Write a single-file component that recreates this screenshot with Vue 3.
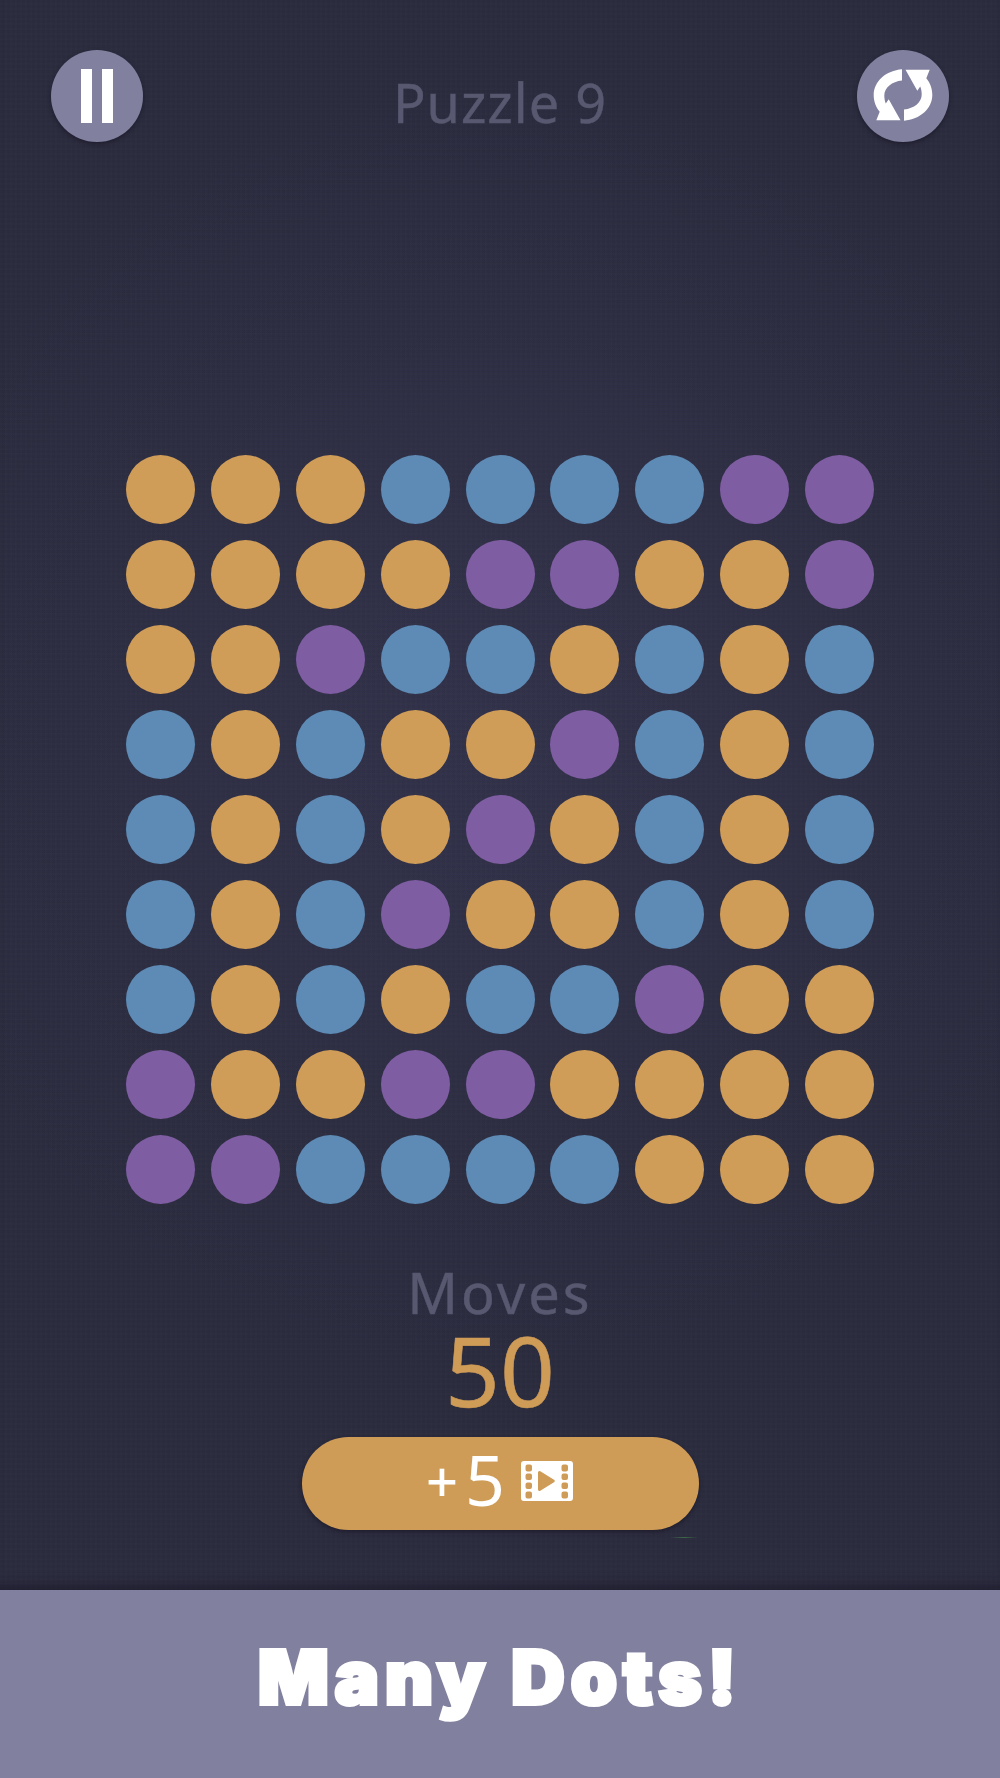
<template>
  <div class="screen">
    <main class="game">
      <header class="top-bar">
        <button class="round-btn">
          <span class="pause-bar"></span>
          <span class="pause-bar"></span>
        </button>
        <h1 class="title">Puzzle 9</h1>
        <button class="round-btn">
          <svg width="92" height="92" viewBox="0 0 92 92">
            <path fill="#fff" d="M45 19.300C29 20.500 16.700 31.500 16.700 45C16.700 51.500 19 57.500 22.700 61.700L19.300 70.300L43.500 70.300L31.700 49.300L28.800 53.500C27.800 51.300 27.300 48.200 27.300 45.500C27.300 37.500 35 31.500 45 30.500Z" />
            <path fill="#fff" transform="rotate(180 46 45)" d="M45 19.300C29 20.500 16.700 31.500 16.700 45C16.700 51.500 19 57.500 22.700 61.700L19.300 70.300L43.500 70.300L31.700 49.300L28.800 53.500C27.800 51.300 27.300 48.200 27.300 45.500C27.300 37.500 35 31.500 45 30.500Z" />
          </svg>
        </button>
      </header>

      <section class="board">
        <span
          v-for="(dot, i) in dots"
          :key="i"
          class="dot"
          :class="colors[dot]"
        ></span>
      </section>

      <section class="moves">
        <div class="moves-label">Moves</div>
        <div class="moves-count">50</div>
        <button class="extra-btn">
          <span class="plus">+</span>
          <span class="five">5</span>
          <svg class="film" width="52" height="40" viewBox="0 0 52 40">
            <path fill="#fff" fill-rule="evenodd" d="M3 0H49A3 3 0 0 1 52 3V37A3 3 0 0 1 49 40H3A3 3 0 0 1 0 37V3A3 3 0 0 1 3 0Z
              M6.500 3.500a2 2 0 0 0-2 2v3a2 2 0 0 0 2 2h2.500a2 2 0 0 0 2-2v-3a2 2 0 0 0-2-2Z
              M6.500 12.500a2 2 0 0 0-2 2v2.500a2 2 0 0 0 2 2h2.500a2 2 0 0 0 2-2v-2.500a2 2 0 0 0-2-2Z
              M6.500 21.500a2 2 0 0 0-2 2v2.500a2 2 0 0 0 2 2h2.500a2 2 0 0 0 2-2v-2.500a2 2 0 0 0-2-2Z
              M6.500 30.500a2 2 0 0 0-2 2v3a2 2 0 0 0 2 2h2.500a2 2 0 0 0 2-2v-3a2 2 0 0 0-2-2Z
              M42.500 3.500a2 2 0 0 0-2 2v3a2 2 0 0 0 2 2h2.500a2 2 0 0 0 2-2v-3a2 2 0 0 0-2-2Z
              M42.500 12.500a2 2 0 0 0-2 2v2.500a2 2 0 0 0 2 2h2.500a2 2 0 0 0 2-2v-2.500a2 2 0 0 0-2-2Z
              M42.500 21.500a2 2 0 0 0-2 2v2.500a2 2 0 0 0 2 2h2.500a2 2 0 0 0 2-2v-2.500a2 2 0 0 0-2-2Z
              M42.500 30.500a2 2 0 0 0-2 2v3a2 2 0 0 0 2 2h2.500a2 2 0 0 0 2-2v-3a2 2 0 0 0-2-2Z
              M17 11.500V28.500A1.500 1.500 0 0 0 19.300 29.800L33 21.300A1.500 1.500 0 0 0 33 18.700L19.300 10.200A1.500 1.500 0 0 0 17 11.500Z" />
          </svg>
        </button>
        <span class="glitch"></span>
      </section>
    </main>

    <footer class="banner">Many Dots!</footer>
  </div>
</template>

<script setup>
const colors = { o: 'orange', b: 'blue', p: 'purple' }

const rows = [
  'ooobbbbpp',
  'ooooppoop',
  'oopbbobob',
  'boboopbob',
  'bobopobob',
  'bobpoobob',
  'bobobbpoo',
  'pooppoooo',
  'ppbbbbooo',
]

const dots = rows.join('').split('')
</script>

<style scoped>
.screen {
  width: 1000px;
  height: 1778px;
  display: flex;
  flex-direction: column;
  overflow: hidden;
  font-family: "Noto Sans", sans-serif;
}

.game {
  flex: 1;
  position: relative;
  background-color: #2b2b3e;
  background-image:
    repeating-linear-gradient(90deg, rgba(255, 255, 255, 0.006) 0 2px, transparent 2px 5px),
    repeating-linear-gradient(0deg, rgba(255, 255, 255, 0.006) 0 2px, transparent 2px 5px),
    radial-gradient(circle at 50% 46%, #31314a 0, #2e2e44 32%, #2b2b3e 65%);
  box-shadow: inset 0 -14px 12px -10px rgba(20, 20, 35, 0.6);
}

.top-bar {
  display: flex;
  justify-content: space-between;
  align-items: center;
  padding: 50px 51px 0 51px;
}

.round-btn {
  width: 92px;
  height: 92px;
  padding: 0;
  border: 0;
  border-radius: 50%;
  background: #81819f;
  box-shadow: 0 2px 4px rgba(15, 15, 30, 0.5);
  display: flex;
  align-items: center;
  justify-content: center;
  gap: 10px;
}

.pause-bar {
  width: 11px;
  height: 54px;
  background: #fff;
}

.title {
  margin: 12px 0 0;
  font-size: 54px;
  font-weight: 400;
  line-height: 80px;
  letter-spacing: 1px;
  color: #585970;
  -webkit-text-stroke: 0.4px #585970;
}

.board {
  display: grid;
  grid-template-columns: repeat(9, 69px);
  gap: 16px 15.9px;
  margin-top: 313px;
  padding-left: 126px;
}

.dot {
  width: 69px;
  height: 69px;
  border-radius: 50%;
}

.orange { background: #d09d58; }
.blue { background: #5d8bb5; }
.purple { background: #7f5da3; }

.moves {
  display: flex;
  flex-direction: column;
  align-items: center;
  margin-top: 53px;
}

.moves-label {
  font-size: 56px;
  line-height: 70px;
  letter-spacing: 3px;
  color: #585970;
  -webkit-text-stroke: 0.4px #585970;
}

.moves-count {
  margin-bottom: 24px;
  font-size: 96px;
  line-height: 86px;
  color: #cf9c57;
  -webkit-text-stroke: 0.6px #cf9c57;
}

.extra-btn {
  width: 397px;
  height: 93px;
  padding: 0 1px 8px 0;
  border: 0;
  border-radius: 47px;
  background: #cf9c57;
  box-shadow: 0 2px 4px rgba(15, 15, 30, 0.5);
  color: #fff;
  font-family: inherit;
  display: flex;
  align-items: center;
  justify-content: center;
}

.plus {
  font-size: 56px;
  line-height: 70px;
  font-weight: 500;
  margin-right: 7px;
}

.five {
  font-size: 70px;
  line-height: 85px;
}

.film {
  margin: 3px 0 0 16px;
}

/* faint artefact under the button */
.glitch {
  position: absolute;
  left: 670px;
  top: 1537px;
  width: 28px;
  height: 1px;
  background: linear-gradient(90deg, transparent, #3d6a47, transparent);
}

.banner {
  height: 188px;
  padding-bottom: 14px;
  box-sizing: border-box;
  background: #81819f;
  color: #fff;
  display: flex;
  align-items: center;
  justify-content: center;
  font-family: Inter, sans-serif;
  font-weight: 900;
  font-size: 74px;
  letter-spacing: 6px;
  -webkit-text-stroke: 4px #fff;
}
</style>

<style>
html, body {
  background: #2b2b3e;
}
</style>
